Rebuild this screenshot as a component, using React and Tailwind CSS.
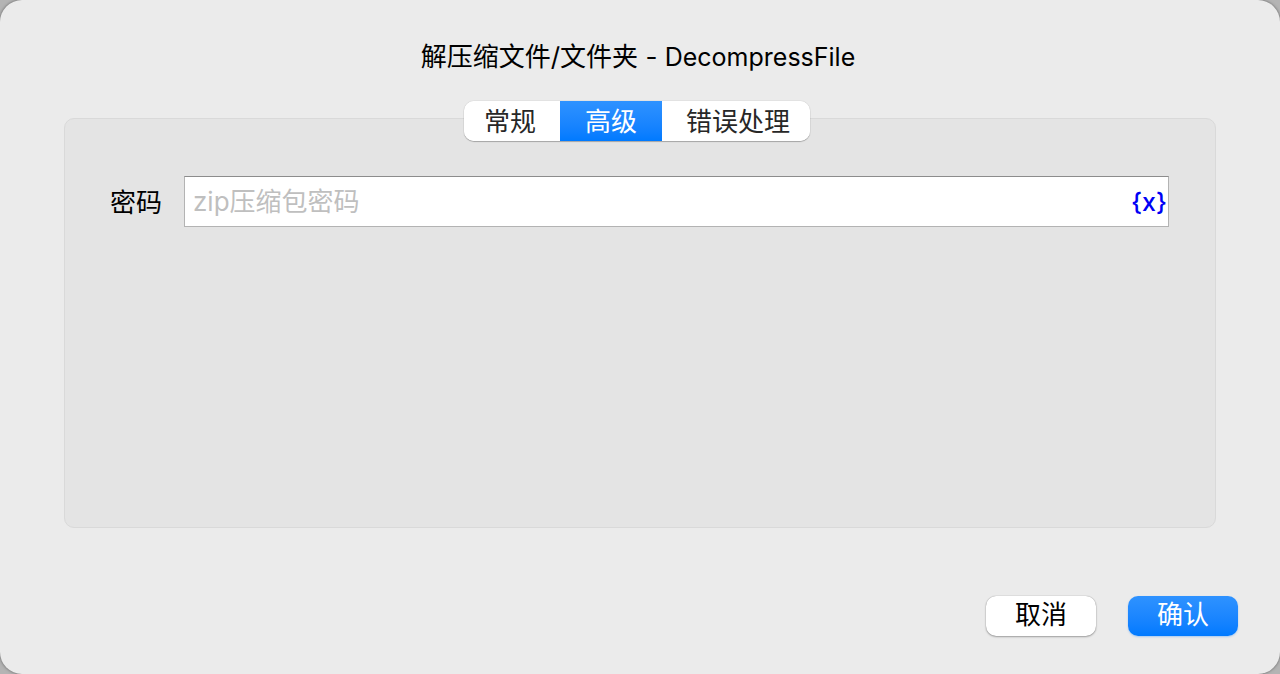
import { useState } from "react";

const tabs = [
  { id: "general", label: "常规", size: "pl-5 pr-6" },
  { id: "advanced", label: "高级", size: "px-[25px]" },
  { id: "errors", label: "错误处理", size: "pl-6 pr-5" },
];

export default function App() {
  const [active, setActive] = useState("advanced");
  const [password, setPassword] = useState("");

  return (
    <div className="min-h-screen bg-[#b4b4b4]">
      <main className="flex min-h-screen flex-col rounded-[22px] bg-[#ebebeb] pt-[39px] pb-[38px] font-['Inter','Noto_Sans_CJK_SC',sans-serif] text-[26px] leading-9 text-black shadow-[0_0_3px_rgba(0,0,0,0.5)]">
        <h1 className="pr-1 text-center">
          解压缩文件/文件夹 - <span className="text-[25px]">DecompressFile</span>
        </h1>

        <div role="tablist" className="z-10 mt-[26px] -mb-[23px] mr-1.5 flex h-10 self-center overflow-hidden rounded-[10px] bg-white shadow-[0_0_1px_rgba(0,0,0,0.35),0_1px_1px_rgba(0,0,0,0.25)]">
          {tabs.map((tab) => (
            <button
              key={tab.id}
              id={`tab-${tab.id}`}
              type="button"
              role="tab"
              aria-selected={active === tab.id}
              onClick={() => setActive(tab.id)}
              className={`pt-0.5 ${tab.size} ${
                active === tab.id
                  ? "bg-linear-to-b from-[#2e92ff] to-[#007aff] text-white"
                  : "bg-white text-[#272727]"
              }`}
            >
              {tab.label}
            </button>
          ))}
        </div>

        <section
          role="tabpanel"
          aria-labelledby={`tab-${active}`}
          className="mx-16 grow rounded-[10px] border border-[#d9d9d9] bg-[#e4e4e4] pt-[57px] pr-[46px] pl-[45px]"
        >
          <div className="flex items-center gap-[22px]">
            <label htmlFor="password" className="shrink-0 pt-0.5">密码</label>
            <div className="flex h-[51px] min-w-0 grow items-center border border-[#b3b3b3] border-t-[#8c8c8c] bg-white">
              <input
                id="password"
                type="text"
                value={password}
                onChange={(event) => setPassword(event.target.value)}
                placeholder="zip压缩包密码"
                className="h-full min-w-0 grow bg-transparent pl-2 outline-none placeholder:text-[#bfbfbf]"
              />
              <button type="button" aria-label="{x}" className="pr-px text-[25px] font-medium text-[#0000f5]">
                {"{x}"}
              </button>
            </div>
          </div>
        </section>

        <footer className="mt-[68px] mr-[42px] flex justify-end gap-8">
          <button type="button" className="h-10 w-[110px] rounded-[10px] bg-white pb-0.5 shadow-[0_0_1px_rgba(0,0,0,0.4),0_1px_2px_rgba(0,0,0,0.3)]">
            取消
          </button>
          <button type="button" className="h-10 w-[110px] rounded-[10px] bg-linear-to-b from-[#2e92ff] to-[#007aff] pb-0.5 text-white shadow-[0_1px_2px_rgba(0,122,255,0.3)]">
            确认
          </button>
        </footer>
      </main>
    </div>
  );
}
